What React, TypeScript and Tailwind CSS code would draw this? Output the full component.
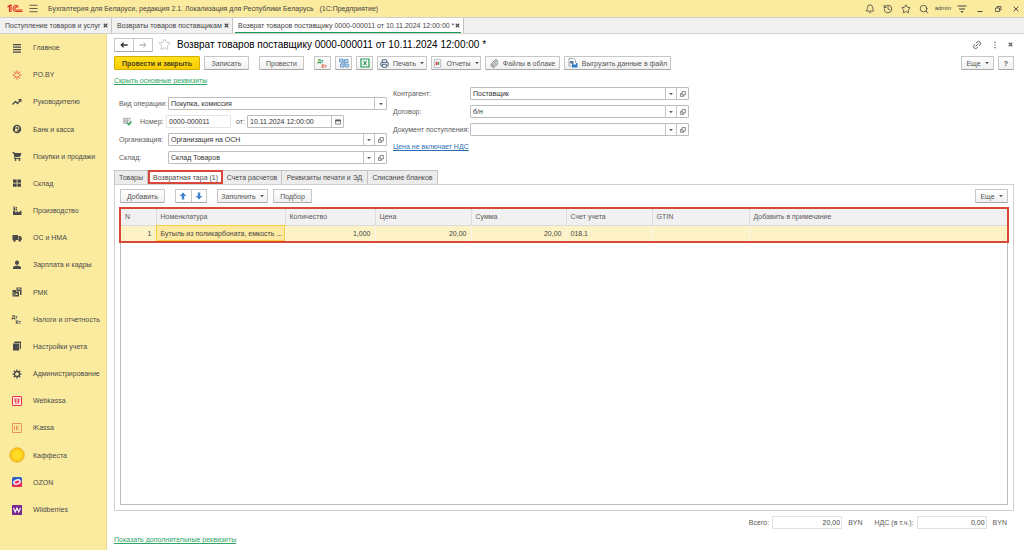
import React, { useState } from 'react';
import { Bell, History, Link2, Menu, Paperclip, Printer, Search, Star } from 'lucide-react';

type IconProps = { children: React.ReactNode; className?: string };

const Icon: React.FC<IconProps> = ({ children, className = 'size-[10px]' }) => (
  <svg viewBox="0 0 20 20" className={`shrink-0 ${className}`} fill="currentColor" aria-hidden="true">
    {children}
  </svg>
);

const CloseIcon = ({ className = 'size-[6px]' }: { className?: string }) => (
  <Icon className={className}>
    <path d="M3 3l14 14M17 3L3 17" stroke="currentColor" strokeWidth="4.4" fill="none" />
  </Icon>
);

const Caret = () => (
  <Icon className="size-[4px]">
    <path d="M1 5h18l-9 11z" />
  </Icon>
);

const OpenIcon = () => (
  <Icon className="size-[6px]">
    <path d="M7 2h11v11H7zM7 8H2v10h10v-5" fill="none" stroke="currentColor" strokeWidth="2.4" />
  </Icon>
);

const menuItems: { label: string; icon: React.ReactNode }[] = [
  {
    label: 'Главное',
    icon: <Icon><path d="M2 2h16v2.4H2zM2 7h16v2.4H2zM2 12h16v2.4H2zM2 17h16v2.4H2z" /></Icon>,
  },
  {
    label: 'PO.BY',
    icon: (
      <Icon className="size-[10px] text-[#e2503a]">
        <path d="M10 1v6M10 13v6M1 10h5M14 10h5M4 3l4 5M16 3l-4 5M4 17l4-5M16 17l-4-5" stroke="currentColor" strokeWidth="2" />
      </Icon>
    ),
  },
  {
    label: 'Руководителю',
    icon: (
      <Icon>
        <path d="M1 15l6-6 4 4 6-7" fill="none" stroke="currentColor" strokeWidth="2.6" />
        <path d="M12 4h7v7z" />
      </Icon>
    ),
  },
  {
    label: 'Банк и касса',
    icon: (
      <Icon>
        <circle cx="10" cy="10" r="8.5" />
        <path d="M8 16V5h3a3 3 0 010 6H6M6 13.500h6" fill="none" stroke="#fbeb9e" strokeWidth="1.8" />
      </Icon>
    ),
  },
  {
    label: 'Покупки и продажи',
    icon: (
      <Icon>
        <path d="M1 2h3.500l1 2H19l-3 8H7l-.5 2H17v2H4l1-4L2.500 4H1z" />
        <circle cx="7" cy="18" r="1.800" />
        <circle cx="15" cy="18" r="1.800" />
      </Icon>
    ),
  },
  {
    label: 'Склад',
    icon: <Icon><path d="M2 3h7.300v6.500H2zM10.700 3H18v6.500h-7.300zM2 11h7.300v6.500H2zM10.700 11H18v6.500h-7.300z" /></Icon>,
  },
  {
    label: 'Производство',
    icon: <Icon><path d="M2 18v-8h4l1 3 5-3v3l7-4v9zM3 4h3v5H3zM7 5h3v4H7zM2 1h4v2H2zM7 2h3v2H7z" /></Icon>,
  },
  {
    label: 'ОС и НМА',
    icon: (
      <Icon>
        <path d="M1 4h11v10H1zM13 6h4l2.500 4v4H13z" />
        <circle cx="5" cy="15" r="2.400" />
        <circle cx="15.500" cy="15" r="2.400" />
      </Icon>
    ),
  },
  {
    label: 'Зарплата и кадры',
    icon: (
      <Icon>
        <path d="M6 5a4 4 0 018 0c0 3-1.500 5-4 5S6 8 6 5zM2 18v-3c0-2 4-3 6-3.500h4c2 .5 6 1.500 6 3.500v3z" />
      </Icon>
    ),
  },
  {
    label: 'РМК',
    icon: (
      <Icon>
        <path d="M1 6h7v3h6v10H1zM9 1h10v15h-3V8H9z" />
        <path d="M3 11h2v2H3zM3 15h2v2H3zM7 13h4v3H7zM11 3h6v2h-6z" fill="#fbeb9e" />
      </Icon>
    ),
  },
  {
    label: 'Налоги и отчетность',
    icon: (
      <svg viewBox="0 0 20 20" className="size-[10px] shrink-0 overflow-visible" fill="currentColor" aria-hidden="true">
        <text x="-1" y="9" className="font-bold text-[10px]">Дт</text>
        <text x="7" y="20" className="font-bold text-[10px]">Кт</text>
      </svg>
    ),
  },
  {
    label: 'Настройки учета',
    icon: <Icon><path d="M5 1h13v14l-2 1V4H4zM2 5h12.500v14H2z" /></Icon>,
  },
  {
    label: 'Администрирование',
    icon: (
      <Icon>
        <circle cx="10" cy="10" r="5" fill="none" stroke="currentColor" strokeWidth="2.600" />
        <path d="M10 1v4M10 15v4M1 10h4M15 10h4M3.600 3.600l3 3M13.400 13.400l3 3M16.400 3.600l-3 3M6.600 13.400l-3 3" stroke="currentColor" strokeWidth="2.500" />
      </Icon>
    ),
  },
  {
    label: 'Webkassa',
    icon: (
      <Icon className="size-[10px] text-[#ec2f4b]">
        <rect x="1" y="1" width="18" height="18" rx="1" fill="#fde9dc" stroke="currentColor" strokeWidth="2" />
        <path d="M4 6h12M4 10h12M6 14h8M7 6v8M13 6v8" stroke="currentColor" strokeWidth="1.400" />
      </Icon>
    ),
  },
  {
    label: 'iKassa',
    icon: (
      <Icon className="size-[10px] text-[#e5834b]">
        <path d="M1 1h18v18H1zM5 5v10M9 5v10M15 5l-5 5 5 5" fill="none" stroke="currentColor" strokeWidth="1.600" />
      </Icon>
    ),
  },
  {
    label: 'Каффеста',
    icon: (
      <Icon className="size-[16px]">
        <circle cx="10" cy="10" r="9" fill="#fbcb1c" stroke="#eda922" strokeWidth="1.200" />
        <circle cx="10" cy="10" r="6" fill="#ffdc22" />
      </Icon>
    ),
  },
  {
    label: 'OZON',
    icon: (
      <Icon>
        <rect width="20" height="20" rx="3" fill="#2f63c8" />
        <path d="M0 14c8 4 15 0 20-6v9a3 3 0 01-3 3H3a3 3 0 01-3-3z" fill="#ee2b52" />
        <ellipse cx="10" cy="10" rx="6.500" ry="4" fill="#ee2b52" stroke="#fff" strokeWidth="2.600" transform="rotate(-18 10 10)" />
      </Icon>
    ),
  },
  {
    label: 'Wildberries',
    icon: (
      <Icon>
        <rect width="20" height="20" rx="1" fill="#7b2a90" />
        <path d="M3 6l3.500 8L10 6l3.500 8L17 6" fill="none" stroke="#fff" strokeWidth="2.200" />
      </Icon>
    ),
  },
];

type ButtonProps = { children: React.ReactNode; className?: string; label?: string };

const ToolButton: React.FC<ButtonProps> = ({ children, className = '', label }) => (
  <button
    type="button"
    aria-label={label}
    className={`flex h-[14px] shrink-0 items-center justify-center gap-1 whitespace-nowrap rounded-[1px] border border-[#c6c6c6] border-b-[#a8a8a8] bg-linear-to-b from-white to-[#f0f0f0] text-[#555] ${className}`}
  >
    {children}
  </button>
);

type FieldProps = {
  id: string;
  label: string;
  value: string;
  labelClass: string;
  open?: boolean;
};

const Field: React.FC<FieldProps> = ({ id, label, value, labelClass, open = true }) => (
  <div className="flex h-[13px] items-center">
    <label htmlFor={id} className={`shrink-0 whitespace-nowrap ${labelClass}`}>{label}</label>
    <div className="flex h-[13px] w-[219px] divide-x divide-[#c4c4c4] rounded-[1px] border border-[#bdbdbd] bg-white">
      <input id={id} defaultValue={value} className="min-w-0 flex-1 px-[2px] text-[#333] outline-none" />
      <button type="button" aria-label="Выбрать" className="flex w-[11px] items-center justify-center"><Caret /></button>
      {open && (
        <button type="button" aria-label="Открыть" className="flex w-[11px] items-center justify-center"><OpenIcon /></button>
      )}
    </div>
  </div>
);

const windowTabs = [
  { title: 'Поступление товаров и услуг', width: 'w-[112px]' },
  { title: 'Возвраты товаров поставщикам', width: 'w-[121px]' },
  { title: 'Возврат товаров поставщику 0000-000011 от 10.11.2024 12:00:00 *', width: 'w-[231px]' },
];

const sections = [
  { title: 'Товары', width: 'w-[34px]' },
  { title: 'Возвратная тара (1)', width: 'w-[75px]' },
  { title: 'Счета расчетов', width: 'w-[59px]' },
  { title: 'Реквизиты печати и ЭД', width: 'w-[86px]' },
  { title: 'Списание бланков', width: 'w-[70px]' },
];

const columns = [
  { title: 'N', width: 'w-[35px]', value: '1', right: true },
  { title: 'Номенклатура', width: 'w-[129px]', value: 'Бутыль из поликарбоната, емкость ...' },
  { title: 'Количество', width: 'w-[90px]', value: '1,000', right: true },
  { title: 'Цена', width: 'w-[96px]', value: '20,00', right: true },
  { title: 'Сумма', width: 'w-[95px]', value: '20,00', right: true },
  { title: 'Счет учета', width: 'w-[86px]', value: '018.1' },
  { title: 'GTIN', width: 'w-[97px]', value: '' },
  { title: 'Добавить в примечание', width: '', value: '' },
];

const TitleBar = () => (
  <header className="flex h-[17px] items-center bg-[#fbeb9e] pr-[3px] pl-[7px] text-[#444]">
    <svg viewBox="0 0 32 18" className="h-[9px] w-[16px]" fill="none" stroke="#dd2f27" strokeWidth="2.200" aria-label="1С">
      <path d="M1 6l4-3v13M8 16V2L3 5" />
      <path d="M23 5.500A6 6 0 1018 15h13M21 7a3 3 0 10-3 5h13" />
    </svg>
    <button type="button" aria-label="Меню" className="ml-[5px]"><Menu className="size-[11px]" strokeWidth={1.8} /></button>
    <span className="ml-[9px] whitespace-pre">Бухгалтерия для Беларуси, редакция 2.1. Локализация для Республики Беларусь   (1С:Предприятие)</span>
    <div className="ml-auto flex items-center gap-[8px]">
      <button type="button" aria-label="Уведомления"><Bell className="size-[10px]" /></button>
      <button type="button" aria-label="История"><History className="size-[10px]" /></button>
      <button type="button" aria-label="Избранное"><Star className="size-[10px]" /></button>
      <button type="button" aria-label="Поиск"><Search className="size-[10px]" /></button>
      <span className="-mx-[2px] text-[6px]">admin</span>
      <button type="button" aria-label="Настройки">
        <Icon>
          <path d="M1 4h18M4 10h12" stroke="currentColor" strokeWidth="2" />
          <path d="M7 14h6l-3 4z" />
        </Icon>
      </button>
      <button type="button" aria-label="Свернуть">
        <Icon><path d="M5 15h10" stroke="currentColor" strokeWidth="2" /></Icon>
      </button>
      <button type="button" aria-label="Восстановить">
        <Icon><path d="M5 8h8v7H5zM8 8V5h8v7h-3" fill="none" stroke="currentColor" strokeWidth="1.600" /></Icon>
      </button>
      <button type="button" aria-label="Закрыть">
        <Icon><path d="M5 5l10 10M15 5L5 15" stroke="currentColor" strokeWidth="1.800" /></Icon>
      </button>
    </div>
  </header>
);

const DocumentForm = () => (
  <div className="mt-[2px] flex gap-[6px]">
    <div className="flex flex-col gap-[5px] pt-[10px] pl-[5px]">
      <Field id="operation" label="Вид операции:" value="Покупка, комиссия" labelClass="w-[49px]" open={false} />
      <div className="flex h-[13px] items-center pl-[4px]">
        <Icon className="size-[9px] text-[#8a8a8a]">
          <path d="M1 3h15v11H1zM4 7h9M4 10h9M4 3v11M9 3v11" fill="none" stroke="currentColor" strokeWidth="1.400" />
          <path d="M9 13l4 4 6-7" fill="none" stroke="#2fa356" strokeWidth="3" />
        </Icon>
        <label htmlFor="number" className="ml-[8px] w-[26px]">Номер:</label>
        <input id="number" defaultValue="0000-000011" className="h-[13px] w-[65px] rounded-[1px] border border-[#e4e4e4] px-[2px] text-[#333]" />
        <label htmlFor="date" className="ml-[5px] w-[11px]">от:</label>
        <div className="flex h-[13px] w-[97px] divide-x divide-[#c4c4c4] rounded-[1px] border border-[#bdbdbd]">
          <input id="date" defaultValue="10.11.2024 12:00:00" className="min-w-0 flex-1 px-[2px] text-[#333]" />
          <button type="button" aria-label="Календарь" className="flex w-[11px] items-center justify-center">
            <Icon className="size-[6px]">
              <path d="M2 4h16v13H2z" fill="none" stroke="currentColor" strokeWidth="2.400" />
              <path d="M1 2h18v6H1z" />
            </Icon>
          </button>
        </div>
      </div>
      <Field id="organization" label="Организация:" value="Организация на ОСН" labelClass="w-[49px]" />
      <Field id="warehouse" label="Склад:" value="Склад Товаров" labelClass="w-[49px]" />
    </div>
    <div className="flex flex-col items-start gap-[5px]">
      <Field id="contractor" label="Контрагент:" value="Поставщик" labelClass="w-[77px]" />
      <Field id="contract" label="Договор:" value="б/н" labelClass="w-[77px]" />
      <Field id="receipt" label="Документ поступления:" value="" labelClass="w-[77px]" />
      <a href="#vat" className="mt-px text-[#2a6fb5] underline">Цена не включает НДС</a>
    </div>
  </div>
);

const GoodsTable = () => (
  <div className="flex-1 border border-[#bcbcbc]">
    <table className="w-full table-fixed border-collapse outline-2 outline-[#d9473a]">
      <thead>
        <tr className="h-[16px] border-b border-[#dcdcdc] bg-[#f1f1f1]">
          {columns.map((col) => (
            <th key={col.title} className={`border-r border-[#dcdcdc] px-[4px] py-0 text-left font-normal last:border-r-0 ${col.width}`}>
              {col.title}
            </th>
          ))}
        </tr>
      </thead>
      <tbody>
        <tr className="h-[16px] bg-[#fdf1c6] text-[#444]">
          {columns.map((col, i) => (
            <td
              key={col.title}
              className={`overflow-hidden whitespace-nowrap border-r border-[#fbf7e6] px-[4px] py-0 last:border-r-0 ${col.right ? 'text-right' : ''} ${i === 1 ? 'bg-[#fde9a0] outline -outline-offset-1 outline-[#f5cf3c]' : ''}`}
            >
              {col.value}
            </td>
          ))}
        </tr>
      </tbody>
    </table>
  </div>
);

const App: React.FC = () => {
  const [section, setSection] = useState(1);

  return (
    <div className="flex min-h-screen flex-col bg-white font-['Liberation_Sans',Arial,sans-serif] text-[7px] leading-[9px] text-[#5a5a5a]">
      <TitleBar />

      {/* Open windows */}
      <nav className="flex h-[17px] border-y border-[#cfcfcf] bg-[#f1f1f1] text-[#444]">
        {windowTabs.map((tab, i) => (
          <div key={tab.title} className={`flex items-center border-r border-[#c4c4c4] px-[2px] ${tab.width} ${i === 2 ? 'bg-white' : ''}`}>
            <div className={`flex h-full flex-1 items-center justify-between pr-px pl-[3px] whitespace-nowrap ${i === 2 ? 'border-b border-[#159a52]' : ''}`}>
              <a href="#window">{tab.title}</a>
              <button type="button" aria-label="Закрыть окно"><CloseIcon className="size-[5px]" /></button>
            </div>
          </div>
        ))}
      </nav>

      <div className="flex flex-1">
        <aside className="flex w-[107px] shrink-0 flex-col border-r border-[#ecdc93] bg-[#fbeb9e] pb-[27px]">
          {menuItems.map((item) => (
            <a key={item.label} href="#section" className="flex flex-1 items-center text-[#4a4a4a]">
              <span className="flex w-[33px] justify-center">{item.icon}</span>
              <span className="whitespace-nowrap">{item.label}</span>
            </a>
          ))}
        </aside>

        <main className="flex min-w-0 flex-1 flex-col pr-[10px] pl-[7px]">
          {/* Document title */}
          <div className="flex h-[21px] items-center">
            <div className="flex h-[14px] w-[39px] divide-x divide-[#c6c6c6] rounded-[1px] border border-[#c6c6c6] border-b-[#a8a8a8]">
              <button type="button" aria-label="Назад" className="flex flex-1 items-center justify-center text-[#333]">
                <Icon className="size-[8px]"><path d="M19 10H4M9 4l-6 6 6 6" fill="none" stroke="currentColor" strokeWidth="3.200" /></Icon>
              </button>
              <button type="button" aria-label="Вперед" className="flex flex-1 items-center justify-center text-[#999]">
                <Icon className="size-[8px]"><path d="M1 10h15M11 4l6 6-6 6" fill="none" stroke="currentColor" strokeWidth="2.400" /></Icon>
              </button>
            </div>
            <Star className="ml-[5px] size-[13px] text-[#b5b5b5]" strokeWidth={1.4} />
            <h1 className="ml-[6px] text-[10px] leading-[13px] text-black">Возврат товаров поставщику 0000-000011 от 10.11.2024 12:00:00 *</h1>
            <div className="ml-auto flex items-center gap-[9px] pr-px">
              <button type="button" aria-label="Ссылка"><Link2 className="size-[10px] -rotate-45" /></button>
              <button type="button" aria-label="Действия">
                <Icon className="size-[8px]"><path d="M8.500 2h3v3h-3zM8.500 8.500h3v3h-3zM8.500 15h3v3h-3z" /></Icon>
              </button>
              <button type="button" aria-label="Закрыть документ"><CloseIcon className="size-[5px]" /></button>
            </div>
          </div>

          {/* Commands */}
          <div className="mt-px flex items-center gap-[4px]">
            <button type="button" className="h-[14px] w-[86px] rounded-[1px] border border-[#d3ae00] bg-linear-to-b from-[#ffe01a] to-[#f8cc00] font-bold text-[#4a4222]">
              Провести и закрыть
            </button>
            <ToolButton className="w-[45px]">Записать</ToolButton>
            <ToolButton className="mx-[6px] w-[45px]">Провести</ToolButton>
            <ToolButton className="w-[17px]" label="Дебет и кредит">
              <svg viewBox="0 0 20 20" className="size-[10px] overflow-visible" aria-hidden="true">
                <text x="-1" y="9" fill="#249a55" className="font-bold text-[10px]">Дт</text>
                <text x="7" y="19" fill="#e0583f" className="font-bold text-[10px]">Кт</text>
              </svg>
            </ToolButton>
            <ToolButton className="w-[17px]" label="Структура подчиненности">
              <Icon className="size-[10px] text-[#4a86c0]">
                <path d="M1 2h7v6H1zM11 3h7v6h-7zM3 12h7v6H3zM12 12h7v6h-7z" fill="#b9d3ea" stroke="currentColor" strokeWidth="1.400" />
                <path d="M8 5h3M6 8v4M8 8l5 5" stroke="currentColor" strokeWidth="1.600" />
              </Icon>
            </ToolButton>
            <ToolButton className="w-[17px]" label="Excel">
              <Icon className="size-[10px] text-[#1f9a50]">
                <path d="M2 2h16v16H2z" fill="none" stroke="currentColor" strokeWidth="2.400" />
                <path d="M7 6l6 8M13 6l-6 8" fill="none" stroke="currentColor" strokeWidth="2.200" />
              </Icon>
            </ToolButton>
            <ToolButton className="w-[50px]"><Printer className="size-[9px] text-[#4b5f80]" strokeWidth={2.6} />Печать<Caret /></ToolButton>
            <ToolButton className="w-[50px]">
              <Icon className="size-[9px]">
                <path d="M3 1h14v18H3z" fill="#fff" stroke="#8f9bab" strokeWidth="1.400" />
                <path d="M6 6h4v8H6z" fill="#db3a3a" />
                <path d="M11 6h3v7h-3z" fill="#3f9a55" />
              </Icon>
              Отчеты
              <Caret />
            </ToolButton>
            <ToolButton className="w-[75px]"><Paperclip className="size-[9px]" />Файлы в облаке</ToolButton>
            <ToolButton className="w-[107px]">
              <Icon className="size-[10px]">
                <path d="M2 1h9l4 4v11H2z" fill="#fff" stroke="#7c8798" strokeWidth="1.500" />
                <path d="M4 6h7v5H4z" fill="#6b7789" />
                <path d="M8 10h11v9H8z" fill="#2f7fc8" />
                <path d="M11 10h5v3h-5z" fill="#fff" />
              </Icon>
              Выгрузить данные в файл
            </ToolButton>
            <ToolButton className="ml-auto w-[33px]">Еще<Caret /></ToolButton>
            <ToolButton className="w-[16px] font-bold" label="Справка">?</ToolButton>
          </div>

          <a href="#main-details" className="mt-[6px] self-start text-[#2fa463] underline">Скрыть основные реквизиты</a>

          <DocumentForm />

          <div className="mt-[6px] flex" role="tablist">
            {sections.map((item, i) => (
              <button
                key={item.title}
                type="button"
                role="tab"
                aria-selected={section === i}
                onClick={() => setSection(i)}
                className={`flex h-[14px] items-center justify-center whitespace-nowrap text-[#4a4a4a] ${item.width} ${
                  section === i ? 'border-2 border-[#d9473a] bg-white' : 'border border-b-0 border-l-0 border-[#c4c4c4] bg-[#ececec] first:border-l'
                }`}
              >
                {item.title}
              </button>
            ))}
          </div>

          <section className="flex flex-1 flex-col border border-[#d0d0d0] px-[5px] pt-[4px] pb-[5px]">
            <div className="mb-[5px] flex items-center">
              <ToolButton className="w-[45px]">Добавить</ToolButton>
              <div className="ml-[10px] flex h-[14px] w-[32px] divide-x divide-[#c6c6c6] rounded-[1px] border border-[#c6c6c6] border-b-[#a8a8a8] text-[#3f83cc]">
                <button type="button" aria-label="Вверх" className="flex flex-1 items-center justify-center">
                  <Icon className="size-[8px]"><path d="M10 1l8 9h-5v9H7v-9H2z" /></Icon>
                </button>
                <button type="button" aria-label="Вниз" className="flex flex-1 items-center justify-center">
                  <Icon className="size-[8px]"><path d="M10 19l8-9h-5V1H7v9H2z" /></Icon>
                </button>
              </div>
              <ToolButton className="ml-[10px] w-[51px]">Заполнить<Caret /></ToolButton>
              <ToolButton className="ml-[5px] w-[39px]">Подбор</ToolButton>
              <ToolButton className="ml-auto w-[33px]">Еще<Caret /></ToolButton>
            </div>
            <GoodsTable />
          </section>

          <div className="mt-[5px] flex items-center justify-end pr-[7px]">
            <label htmlFor="total">Всего:</label>
            <input id="total" readOnly value="20,00" className="mr-[6px] ml-[3px] h-[13px] w-[70px] border border-[#e2e2e2] px-px text-right text-[#444]" />
            <span>BYN</span>
            <label htmlFor="vat" className="ml-[12px]">НДС (в т.ч.):</label>
            <input id="vat" readOnly value="0,00" className="mr-[6px] ml-[3px] h-[13px] w-[70px] border border-[#e2e2e2] px-px text-right text-[#444]" />
            <span>BYN</span>
          </div>
          <a href="#extra-details" className="mt-[6px] mb-[6px] self-start text-[#2fa463] underline">Показать дополнительные реквизиты</a>
        </main>
      </div>
    </div>
  );
};

export default App;
